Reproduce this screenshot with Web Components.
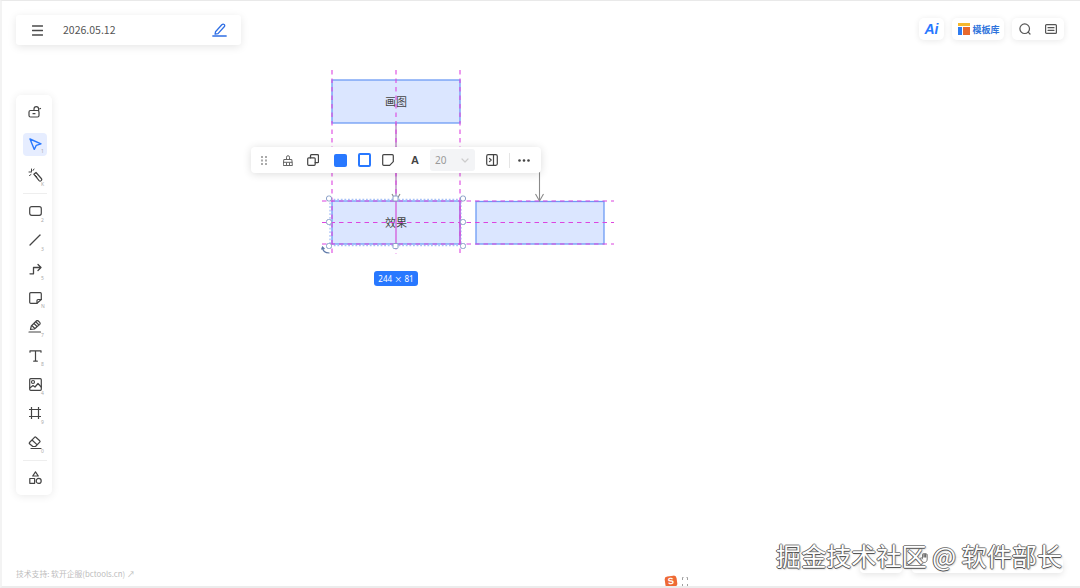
<!DOCTYPE html>
<html lang="zh">
<head>
<meta charset="utf-8">
<title>白板</title>
<style>
html,body{margin:0;padding:0;background:#fff}
body{width:1080px;height:588px;overflow:hidden;font-family:"Noto Sans CJK SC","Noto Sans",sans-serif}
</style>
</head>
<body>
<board-app>
  <board-canvas slot="canvas"></board-canvas>
  <float-toolbar slot="float"></float-toolbar>
  <top-bar slot="top"></top-bar>
  <tool-rail slot="rail"></tool-rail>
  <foot-bar slot="foot"></foot-bar>
  <water-mark slot="mark">掘金技术社区 @ 软件部长</water-mark>
</board-app>
<script>
const S='fill="none" stroke="currentColor" stroke-width="1.2" stroke-linecap="round" stroke-linejoin="round"';
const svg=(w,h,body,vb)=>`<svg width="${w}" height="${h}" viewBox="${vb||`0 0 ${w} ${h}`}" ${S}>${body}</svg>`;
function def(name,css,html){
  customElements.define(name,class extends HTMLElement{
    constructor(){super();const r=this.attachShadow({mode:'open'});r.innerHTML=`<style>${css}</style>${typeof html==='function'?html(this):html}`;}
  });
}
def('board-app',`
  :host{display:block;position:relative;width:1080px;height:588px;box-sizing:border-box;background:#fff;
    border-top:1px solid #e9e9e9;border-bottom:2px solid #ececec;border-left:2px solid #f3f3f3;overflow:hidden}
  .shell{display:flex;flex-direction:column;height:100%;box-sizing:border-box;padding:14px 16px 6px 14px;position:relative;z-index:2;pointer-events:none}
  .mid{flex:1;padding-top:50px}
`,`<slot name="canvas"></slot><slot name="float"></slot>
<div class="shell"><slot name="top"></slot><div class="mid"><slot name="rail"></slot></div><slot name="foot"></slot></div>
<slot name="mark"></slot>`);

def('board-canvas',`:host{display:block;position:absolute;left:-2px;top:-1px;width:1080px;height:588px}
  svg{display:block}
  text{font:11px "Noto Sans CJK SC",sans-serif;fill:#444;text-anchor:middle}
`,`<svg width="1080" height="588" viewBox="0 0 1080 588" fill="none">
  <g fill="#dbe6ff" stroke="#6d9bf5" stroke-width="1.3">
    <rect x="332" y="80" width="128" height="43"/>
    <rect x="332" y="201" width="128" height="43"/>
    <rect x="476" y="201.500" width="128" height="42.500"/>
  </g>
  <g stroke="#8a8a8a" stroke-width="1.1">
    <path d="M392 194l4 7 4-7" />
    <path d="M539.500 170V201"/>
    <path d="M535.500 194l4 7 4-7"/>
  </g>
  <path d="M396 123V201" stroke="#a878b8" stroke-width="1.2"/>
  <text x="396" y="105.500">画图</text>
  <text x="396" y="226.500">效果</text>
  <rect x="330" y="199.500" width="131" height="46" stroke="#a9c2f7" stroke-width="1.300" stroke-dasharray="1.800 1.800"/>
  <g stroke="#dc45e0" stroke-width="1.100" stroke-dasharray="4.500 4">
    <path d="M332 70V254M396 70V200M460 70V254M396 245V254"/>
    <path d="M322 201H614M322 222.500H614M322 244H614"/>
  </g>
  <path d="M396 201V245M460 201V245" stroke="#d24fd8" stroke-width="1.200"/>
  <g fill="#fff" stroke="#8aa0c8" stroke-width="1">
    <rect x="326.500" y="196" width="5" height="5" rx="2"/>
    <rect x="393" y="196" width="5" height="5" rx="1"/>
    <rect x="460.500" y="196" width="5" height="5" rx="2"/>
    <rect x="326.500" y="219.500" width="5" height="5" rx="2"/>
    <rect x="460.500" y="219.500" width="5" height="5" rx="2"/>
    <rect x="326.500" y="243.500" width="5" height="5" rx="2"/>
    <rect x="393" y="243.500" width="5" height="5" rx="1"/>
    <rect x="460.500" y="243.500" width="5" height="5" rx="2"/>
  </g>
  <path d="M322.500 247c0 3.500 2.500 6 7 6M321.500 249.500l1-2.500 2 2" stroke="#5d78a8" stroke-width="1.100"/>
</svg>
<size-tag></size-tag>`);

def('size-tag',`:host{position:absolute;left:374px;top:271px;width:44px;height:15px;border-radius:3px;background:#2878ff;color:#fff;
  font:8px/15px "Noto Sans",sans-serif;text-align:center;letter-spacing:.05px}
  .x{font:8px/15px "Noto Sans CJK SC",sans-serif}`,`244 <span class="x">×</span> 81`);

def('top-bar',`:host{display:flex;align-items:flex-start;justify-content:space-between;height:30px}`,
`<title-card></title-card><right-tools></right-tools>`);

def('title-card',`:host{display:flex;align-items:center;box-sizing:border-box;width:225px;height:30px;background:#fff;border-radius:3px;
  box-shadow:0 2px 8px rgba(0,0,0,.10);color:#555}
  .m{width:42px;display:flex;justify-content:center;color:#4a4a4a;box-sizing:border-box}
  .t{flex:1;font-size:10.500px;line-height:14px;padding:0 0 1px 5px;color:#555}
  .e{width:44px;display:flex;justify-content:center;color:#2f6fe4;margin-left:1px}`,
`<span class="m">${svg(11,11,'<path d="M.3 1h10.400M.3 5.500h10.400M.3 10h10.400" stroke-width="1.300"/>')}</span><span class="t">2026.05.12</span>
<span class="e">${svg(15,14,'<path d="M3.500 8.800 9.800 1.800c.8-.8 1.700-.9 2.400-.2.700.6.700 1.500 0 2.200L6 10.600l-2.900.6z" stroke-width="1.300"/><path d="M.8 13h13.400" stroke-width="1.300"/>')}</span>`);

def('right-tools',`:host{display:flex;gap:8px;align-items:center;margin-top:3px}
  .c{display:flex;align-items:center;justify-content:center;height:22px;background:#fff;border-radius:5px;box-shadow:0 1px 6px rgba(0,0,0,.09)}
  .ai{width:25px;color:#2878ff;font:italic 700 14px "Liberation Sans",sans-serif}
  .tp{width:52px;color:#2f74dc;font-size:9px;font-weight:700;gap:2px;padding-left:2px;box-sizing:border-box}
  .sr{width:52px;color:#555}
  .sr span{width:26px;display:flex;justify-content:center}`,
`<div class="c ai">Ai</div>
<div class="c tp"><svg width="12" height="12" viewBox="0 0 12 12"><rect x="0" y="0" width="12" height="3" fill="#f5b82e"/><rect x="0" y="4" width="4" height="8" fill="#2f7cf0"/><rect x="5" y="4" width="7" height="8" fill="#e8692c"/></svg>模板库</div>
<div class="c sr"><span>${svg(12,12,'<circle cx="5.700" cy="5.700" r="4.800"/><path d="M9.200 9.200 11 11"/>')}</span><span style="padding-left:1px">${svg(12,10,'<rect x=".6" y=".6" width="10.800" height="8.800" rx="1"/><path d="M3 3.700h6M3 6.300h6"/>')}</span></div>`);

def('rail-item',`:host{display:flex;position:relative;width:24px;height:28.875px;align-items:center;justify-content:center;color:#444;border-radius:4px;flex:none}
  :host([active]){background:#e6edff;color:#2878ff;height:23px;margin:3px 0}
  .k{position:absolute;left:18px;top:20px;font:5px/6px "Noto Sans",sans-serif;color:#aaa}
  :host([active]) .k{top:15px}`,
  h=>`<slot></slot><span class="k">${h.getAttribute('k')||''}</span>`);

def('tool-rail',`:host{display:flex;flex-direction:column;align-items:center;box-sizing:border-box;width:36px;height:400px;padding:3px 0 0 2px;background:#fff;border-radius:5px;box-shadow:0 1px 8px rgba(0,0,0,.09);pointer-events:auto}
  .d{width:24px;height:1px;background:#eee;flex:none;margin:3px 0}
  .g{height:3px;flex:none}`,
`<rail-item>${svg(14,12,'<rect x="1" y="4.500" width="10" height="6.500" rx="1.500"/><path d="M6 4.500V3a2.300 2.300 0 0 1 4.600 0v1.500M12.500 2.500l-.6.300M5 7.700h2" stroke-width="1.200"/>')}</rail-item>
<div class="g"></div>
<rail-item active k="1">${svg(13,12,'<path d="M1 1 12 5.800 7.300 7.300 5.300 11.500z" stroke-width="1.400"/>')}</rail-item>
<div class="g" style="height:2px"></div>
<rail-item k="K">${svg(15,15,'<path d="M5.800 6.200 8 4.500l5.300 6c.7.800.5 1.500-.1 2.100-.7.600-1.500.6-2.100 0z"/><path d="M7 7l2 2M3.500 1v2.500M1 4h2.500M1.500 7.500 3 6.500M6 1 5 2.500" stroke-width="1"/>')}</rail-item>
<div class="d"></div>
<rail-item k="2">${svg(13,10,'<rect x=".7" y=".7" width="11.600" height="8.600" rx="2"/>')}</rail-item>
<rail-item k="3">${svg(12,12,'<path d="M1 11 11 1" stroke-width="1.300"/>')}</rail-item>
<rail-item k="5">${svg(13,12,'<path d="M1 10.800h3.500V4.500h7.500M9 1.500l3 3-3 3" stroke-width="1.300"/>')}</rail-item>
<rail-item k="N">${svg(13,12,'<path d="M1.700.7h9.600a1 1 0 0 1 1 1v5.800L8 11.300H1.700a1 1 0 0 1-1-1v-8.600a1 1 0 0 1 1-1z"/><path d="M12.300 7.500H9a1 1 0 0 0-1 1v2.800"/>')}</rail-item>
<rail-item k="7">${svg(14,13,'<path d="M2.500 9.500 3.300 6 8.300 1c.6-.6 1.400-.6 2 0l1.400 1.400c.6.600.6 1.400 0 2L6.500 9zM3.800 5.500l3 3M6 3.500l3 3M8 2l3 3"/><path d="M1 12h11.500"/>')}</rail-item>
<rail-item k="8">${svg(13,12,'<path d="M1 2.200V.8h11v1.400M6.500.8v10.400M4.700 11.200h3.600"/>')}</rail-item>
<rail-item k="4">${svg(13,13,'<rect x=".7" y=".7" width="11.600" height="11.600" rx="1"/><circle cx="4" cy="4" r="1.500"/><path d="M.8 10 4 7.500l2 1.500 3-3.500 3.200 3.500"/>')}</rail-item>
<rail-item k="9">${svg(12,12,'<rect x="2.500" y="2.500" width="7" height="7"/><path d="M2.500 0v2.500H0M9.500 0v2.500H12M2.500 12V9.500H0M9.500 12V9.500H12"/>')}</rail-item>
<rail-item k="0">${svg(14,13,'<path d="M1.500 6.500 6.500 1.300c.4-.4 1-.4 1.400 0l3.800 3.500c.4.400.4 1 0 1.400L7.500 10.500H4.800L1.500 7.800c-.3-.4-.3-.9 0-1.300zM4 4l5 4.600M3 12.500h10"/>')}</rail-item>
<div class="d" style="margin:3px 0 2px"></div>
<rail-item>${svg(13,13,'<path d="M6.500.8 9.300 5H3.700z"/><rect x=".8" y="7.500" width="4.800" height="4.800"/><circle cx="9.700" cy="9.900" r="2.500"/>')}</rail-item>`);

def('foot-bar',`:host{display:block;font-size:7.800px;line-height:12px;color:#bdbdbd;height:12px;margin-top:auto}
  .wrap{display:flex;align-items:center}`,`<div class="wrap">技术支持: 软开企服(bctools.cn) ↗</div>`);

def('tb-cell',`:host{display:flex;align-items:center;justify-content:center;flex:none;color:#444;height:26px}`,`<slot></slot>`);

def('float-toolbar',`:host{position:absolute;left:249px;top:146px;width:290px;height:26px;display:flex;align-items:center;background:#fff;border-radius:4px;box-shadow:0 1px 8px rgba(0,0,0,.14);z-index:1}
  .sel{display:flex;align-items:center;justify-content:space-between;box-sizing:border-box;width:45px;height:22px;padding:0 6px 0 5px;background:#f3f4f6;border-radius:3px;font:10px "Noto Sans",sans-serif;color:#999;flex:none}
  .dv{width:1px;height:15px;background:#e5e5e5;flex:none}
  .fill{width:13px;height:13px;border-radius:2px;background:#2878ff;display:block}
  .bord{width:9.400px;height:9.400px;border-radius:2px;border:2px solid #2878ff;display:block}
  .A{font:700 11px "Liberation Sans",sans-serif;color:#444}`,
`<tb-cell style="width:26px;color:#aaa"><svg width="6" height="9" viewBox="0 0 6 9" fill="#aaa"><rect x="0" y="0" width="2" height="2"/><rect x="4" y="0" width="2" height="2"/><rect x="0" y="3.500" width="2" height="2"/><rect x="4" y="3.500" width="2" height="2"/><rect x="0" y="7" width="2" height="2"/><rect x="4" y="7" width="2" height="2"/></svg></tb-cell>
<tb-cell style="width:22px;color:#666">${svg(10,11,'<path d="M3.500 4.500V2.200a1.500 1.500 0 0 1 3 0v2.300M1.200 4.500h7.600l.6 6H.6zM.9 7.300h8.200M3.500 8v2.500M6.500 8v2.500" stroke-width="1"/>')}</tb-cell>
<tb-cell style="width:28px">${svg(12,12,'<rect x=".7" y="3.800" width="7.500" height="7.500" rx="1"/><path d="M3.500 3.800V1.700a1 1 0 0 1 1-1h6a1 1 0 0 1 1 1v6a1 1 0 0 1-1 1H8.200" stroke-width="1.300"/>')}</tb-cell>
<tb-cell style="width:26px"><span class="fill"></span></tb-cell>
<tb-cell style="width:23px"><span class="bord"></span></tb-cell>
<tb-cell style="width:24px">${svg(12,12,'<path d="M1.700.7h8.600a1 1 0 0 1 1 1v6l-3.600 3.600H1.700a1 1 0 0 1-1-1v-8.600a1 1 0 0 1 1-1z"/>')}</tb-cell>
<tb-cell style="width:30px"><span class="A">A</span></tb-cell>
<div class="sel"><span>20</span>${svg(8,5,'<path d="M1 1l3 3 3-3"/>').replace('currentColor','#ccc')}</div>
<tb-cell style="width:34px">${svg(12,12,'<rect x=".7" y=".7" width="10.600" height="10.600" rx="1.500"/><path d="M7.500 1v10M3.500 4.300 5.200 6 3.500 7.700"/>')}</tb-cell>
<div class="dv"></div>
<tb-cell style="width:29px;padding-right:1px;box-sizing:border-box"><svg width="12" height="3" viewBox="0 0 12 3" fill="#444"><circle cx="1.500" cy="1.500" r="1.300"/><circle cx="6" cy="1.500" r="1.300"/><circle cx="10.500" cy="1.500" r="1.300"/></svg></tb-cell>`);

def('water-mark',`:host{position:absolute;right:18px;bottom:14px;z-index:5;font:25.100px/34px "Noto Sans CJK SC",sans-serif;color:#fff;white-space:nowrap;
  text-shadow:-1px 0 #555,0 1px #555,1px 0 #888,0 -1px #888,1px 1px 2px #aaa}`,`<slot></slot>`);

def('corner-bits',`:host{position:absolute;left:663px;top:575px;display:flex;align-items:center;gap:5px;z-index:3}
  .s{width:12px;height:11px;background:#ee6a35;border-radius:3px;color:#fff;font:700 9px/11px "Liberation Sans",sans-serif;text-align:center;transform:rotate(-8deg)}
  .b{width:6px;height:10px;display:block;color:#888}`,
`<div class="s">S</div><svg class="b" viewBox="0 0 6 10" fill="none" stroke="currentColor" stroke-width=".8"><path d="M.5 3V.5h1M4.500.5h1V3M.5 7v2.500h1M4.500 9.500h1V7"/></svg>`);

def('bottom-pills',`:host{position:absolute;left:858px;top:557px;display:flex;gap:10px;z-index:2}
  .p{height:15px;background:#fff;border-radius:4px;box-shadow:0 2px 6px rgba(0,0,0,.1)}
  svg{position:absolute;left:60px;top:-5px;color:#555;z-index:6}`,
`<div class="p" style="width:42px"></div><div class="p" style="width:151px"></div>
${svg(9,10,'<path d="M2.500 5V1.500a.8.8 0 0 1 1.600 0V4M4.100 4V1a.8.8 0 0 1 1.600 0v3M5.700 4V1.500a.8.8 0 0 1 1.500 0V6c0 2-1 3.500-3 3.500-1.500 0-2.500-1-3-2.500L.5 5.500c-.2-.8.8-1.200 1.300-.5l.7 1" stroke-width=".8"/>')}`);

document.querySelector('board-app').shadowRoot.append(document.createElement('corner-bits'),document.createElement('bottom-pills'));
</script>
</body>
</html>
